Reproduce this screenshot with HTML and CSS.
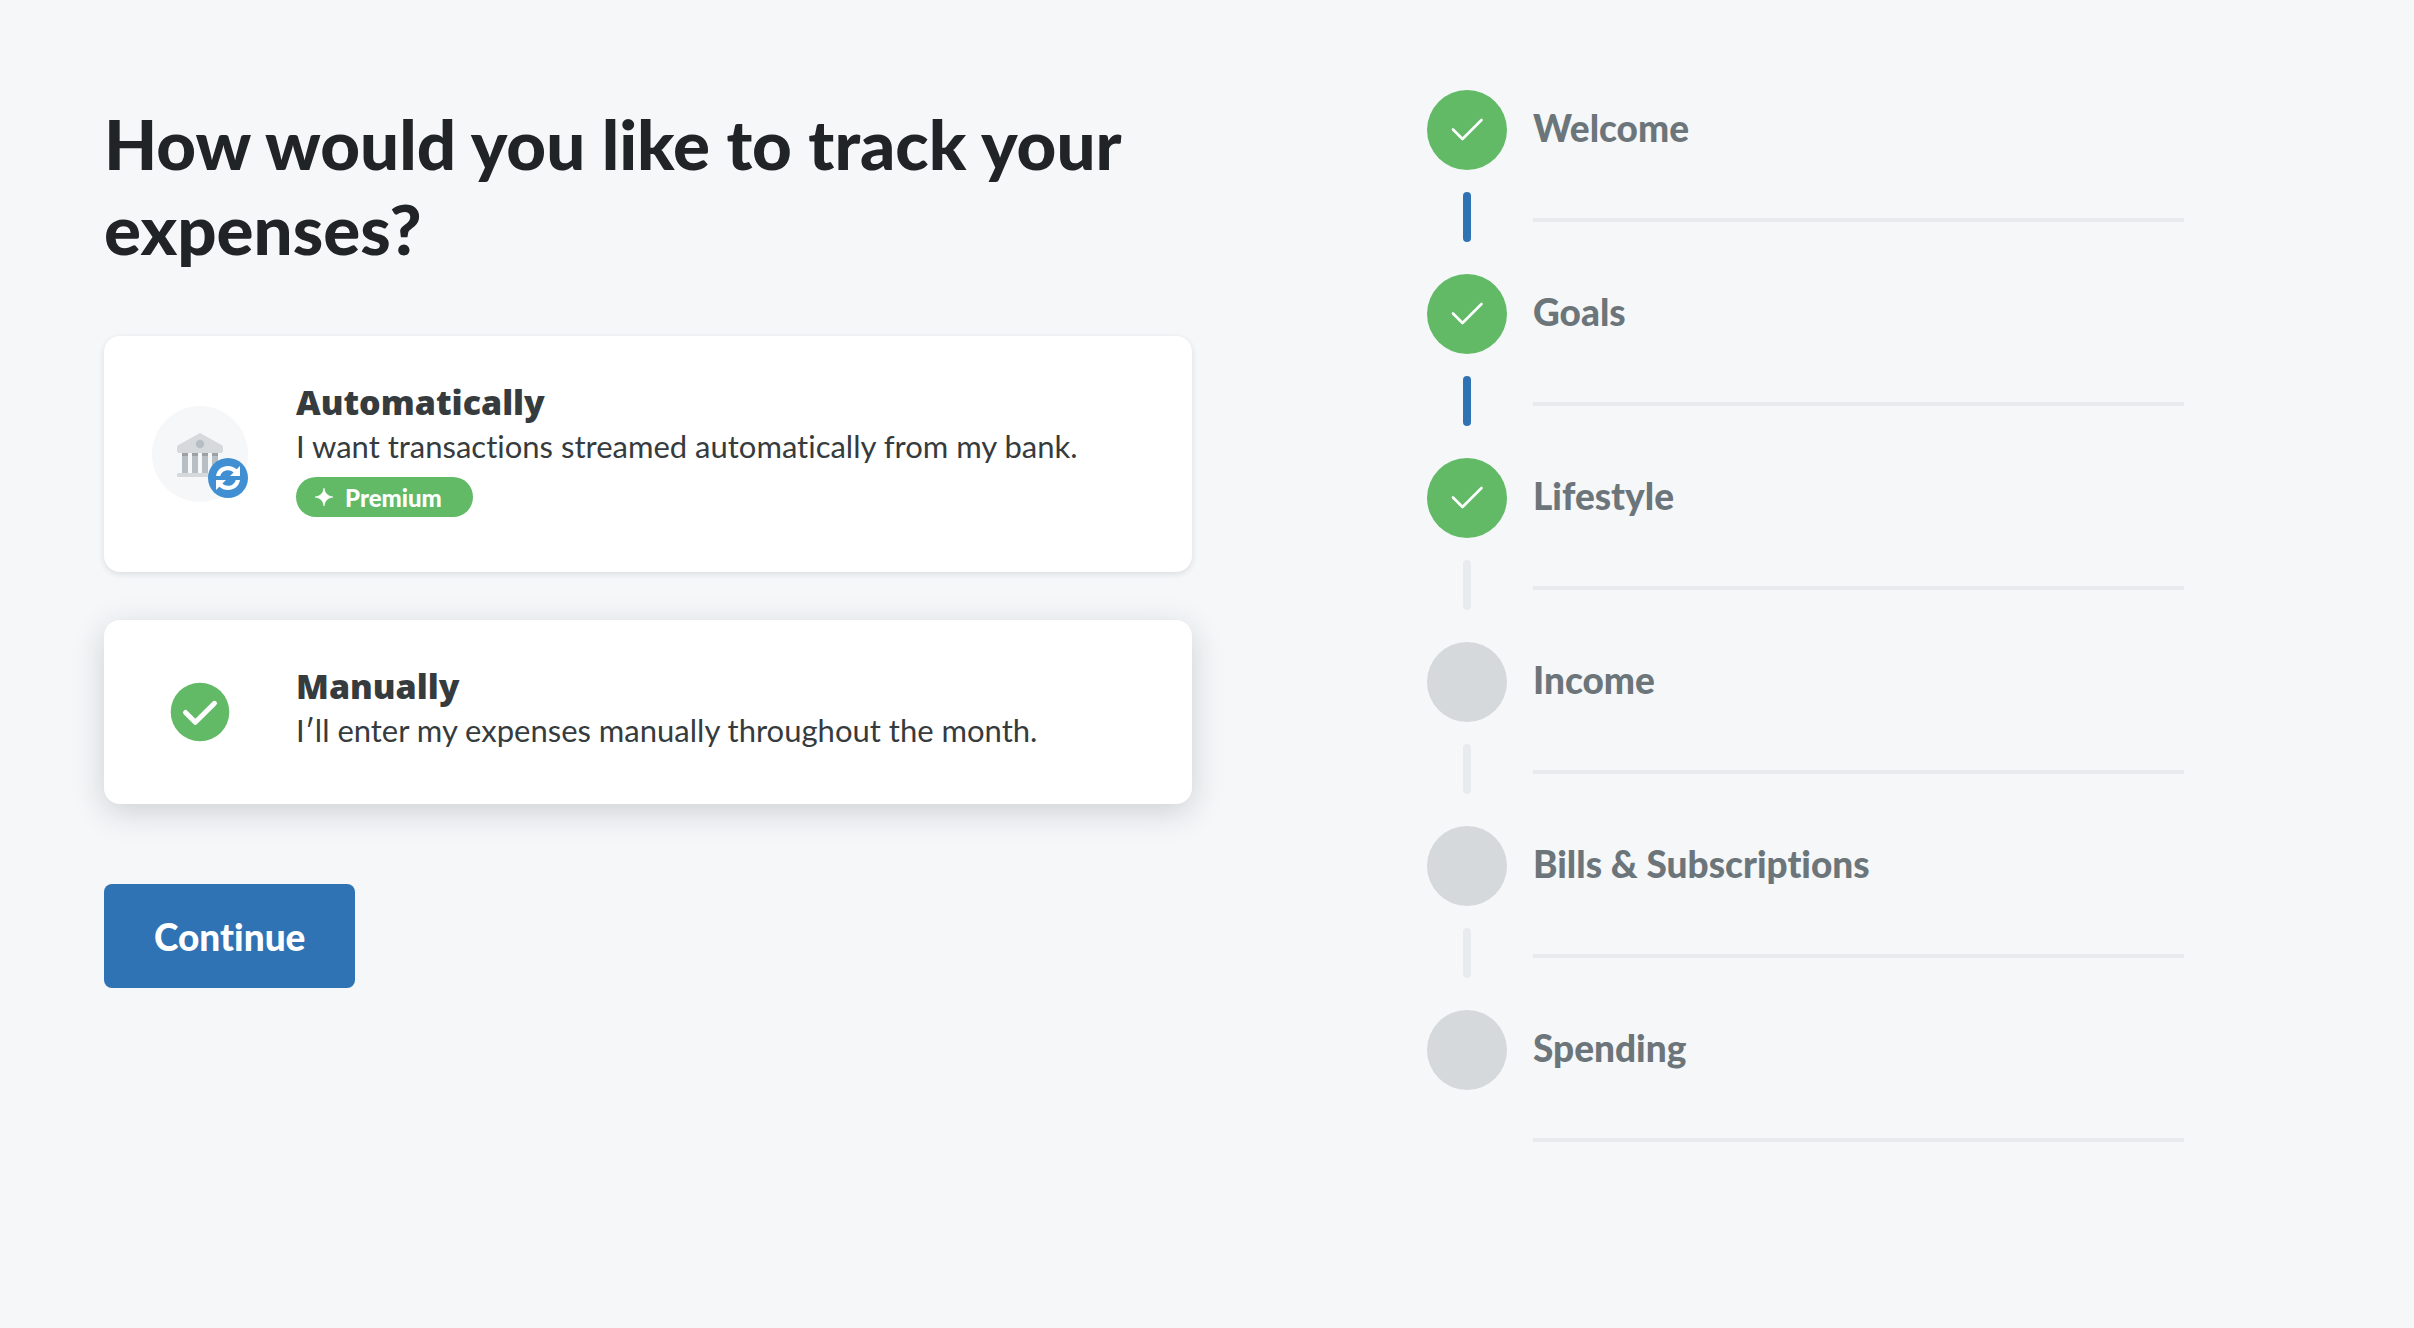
FILE: index.html
```html
<!DOCTYPE html>
<html lang="en">
<head>
<meta charset="utf-8">
<meta name="viewport" content="width=device-width, initial-scale=1">
<title>Expense tracking</title>
<link rel="stylesheet" href="styles.css">
</head>
<body>
<svg class="defs" aria-hidden="true">
  <symbol id="step-check" viewBox="0 0 80 80">
    <path d="M26 39.500 L35.500 49 L54.500 30" fill="none" stroke="#fff" stroke-width="2.600" stroke-linecap="round" stroke-linejoin="round"/>
  </symbol>
</svg>
<div class="page">
  <main class="question">
    <form>
      <h1 class="title" id="question">How would you like to track your expenses?</h1>
      <div class="options" role="radiogroup" aria-labelledby="question">
        <label class="option">
          <input class="option-input" type="radio" name="tracking" value="automatic">
          <svg class="option-icon" viewBox="0 0 96 96" aria-hidden="true">
            <circle cx="48" cy="48" r="48" fill="#f5f7f9"/>
            <path d="M25 41.500 Q25 39.800 26.500 39 L48 27 L69.500 39 Q71 39.800 71 41.500 V45 Q71 47 69 47 H27 Q25 47 25 45 Z" fill="#d5d9dc"/>
            <circle cx="48" cy="38" r="4.200" fill="#b8bfc4"/>
            <path d="M30 47h6v20h-6z M40 47h6v20h-6z M50 47h6v20h-6z M60 47h6v20h-6z" fill="#b8bfc4"/>
            <path d="M30 47h6v3h-6z M40 47h6v3h-6z M50 47h6v3h-6z M60 47h6v3h-6z" fill="#9aa0a4"/>
            <rect x="25" y="67" width="46" height="4" rx="1.500" fill="#d5d9dc"/>
            <circle cx="76" cy="72" r="20" fill="#3f8fd2"/>
            <path id="sync-half" d="M64 70 C65 63.500 70 60 76 60 C79.500 60 82.500 61.300 84.700 63.300 L88 60 V70 H78 L81.600 66.400 C80 65 78.200 64.200 76 64.200 C72 64.200 69.200 66.500 68.300 70 Z" fill="#fff"/>
            <use href="#sync-half" transform="rotate(180 76 72)"/>
          </svg>
          <span class="option-text">
            <span class="option-name">Automatically</span>
            <span class="option-desc">I want transactions streamed automatically from my bank.</span>
            <span class="badge">
              <svg class="badge-icon" viewBox="0 0 18 18" aria-hidden="true"><path d="M9 0 Q10 8 18 9 Q10 10 9 18 Q8 10 0 9 Q8 8 9 0Z" fill="#fff" stroke="#fff" stroke-width=".6"/></svg>
              Premium
            </span>
          </span>
        </label>
        <label class="option">
          <input class="option-input" type="radio" name="tracking" value="manual" checked>
          <svg class="option-icon" viewBox="0 0 96 96" aria-hidden="true">
            <circle cx="48" cy="48" r="29.300" fill="#62ba66"/>
            <path d="M33.500 48.500 L43.300 58.300 L62.500 39.300" fill="none" stroke="#fff" stroke-width="5" stroke-linecap="round" stroke-linejoin="round"/>
          </svg>
          <span class="option-text">
            <span class="option-name">Manually</span>
            <span class="option-desc">I′ll enter my expenses manually throughout the month.</span>
          </span>
        </label>
      </div>
      <button class="continue" type="submit">Continue</button>
    </form>
  </main>
  <aside class="progress" aria-label="Setup progress">
    <ol class="steps">
      <li class="step step-done step-passed"><span class="marker"><svg class="dot"><use href="#step-check"/></svg></span><span class="step-name">Welcome</span></li>
      <li class="step step-done step-passed"><span class="marker"><svg class="dot"><use href="#step-check"/></svg></span><span class="step-name">Goals</span></li>
      <li class="step step-done"><span class="marker"><svg class="dot"><use href="#step-check"/></svg></span><span class="step-name">Lifestyle</span></li>
      <li class="step"><span class="marker"><span class="dot"></span></span><span class="step-name">Income</span></li>
      <li class="step"><span class="marker"><span class="dot"></span></span><span class="step-name">Bills &amp; Subscriptions</span></li>
      <li class="step"><span class="marker"><span class="dot"></span></span><span class="step-name">Spending</span></li>
    </ol>
  </aside>
</div>
</body>
</html>
```
FILE: styles.css
```css
* {
  box-sizing: border-box;
}

body {
  margin: 0;
  background: #f5f7f9;
  color: #363b3e;
  font-family: Lato, "Open Sans", sans-serif;
  font-variant-ligatures: none;
}

.defs {
  display: none;
}

.page {
  display: grid;
  grid-template-columns: 1088fr 757fr;
  gap: 235px;
  align-items: start;
  padding: 90px 230px 90px 104px;
}

.title {
  margin: 11px 0 65px;
  color: #212427;
  font-size: 69px;
  line-height: 85px;
  font-weight: 900;
}

.options {
  display: flex;
  flex-direction: column;
  gap: 48px;
}

.option {
  display: flex;
  align-items: center;
  gap: 48px;
  padding: 48px;
  border-radius: 16px;
  background: #fff;
  box-shadow: 0 2px 6px rgba(33, 36, 39, 0.12);
  cursor: pointer;
}

.option:has(:checked) {
  box-shadow: 0 8px 32px rgba(33, 36, 39, 0.18);
}

.option-input {
  position: absolute;
  opacity: 0;
  pointer-events: none;
}

.option-icon {
  flex: none;
  width: 96px;
  height: 96px;
  margin-block: -8px;
}

.option-text {
  display: flex;
  flex-direction: column;
  align-items: flex-start;
}

.option-name {
  font-family: "Noto Sans", "Open Sans", sans-serif;
  font-size: 34px;
  line-height: 36px;
  font-weight: 900;
}

.option-desc {
  margin: 4px 0;
  font-size: 31px;
  line-height: 44px;
}

.badge {
  display: flex;
  align-items: center;
  gap: 12px;
  height: 40px;
  margin: 5px 0 7px;
  padding: 0 31px 0 19px;
  border-radius: 20px;
  background: #62ba66;
  color: #fff;
  font-size: 24px;
  font-weight: 900;
}

.badge-icon {
  width: 18px;
  height: 18px;
}

.continue {
  margin-top: 80px;
  padding: 0 50px;
  height: 104px;
  border: 0;
  border-radius: 8px;
  background: #2f73b5;
  color: #fff;
  font: 900 37px Lato, "Open Sans", sans-serif;
  font-variant-ligatures: none;
  cursor: pointer;
}

.steps {
  margin: 0;
  padding: 0;
  list-style: none;
}

.step {
  display: flex;
  gap: 26px;
  height: 184px;
}

.marker {
  display: flex;
  flex-direction: column;
  align-items: center;
  gap: 22px;
}

.dot {
  width: 80px;
  height: 80px;
  border-radius: 50%;
  background: #d5d9dc;
}

.step-done .dot {
  background: #62ba66;
}

.step:not(:last-child) .marker::after {
  content: "";
  width: 8px;
  height: 50px;
  border-radius: 4px;
  background: #e8ebed;
}

.step-passed:not(:last-child) .marker::after {
  background: #2f73b5;
}

.step-name {
  flex: 1;
  height: 132px;
  border-bottom: 4px solid #e8ebed;
  color: #6c757a;
  font-size: 37px;
  line-height: 76px;
  font-weight: 900;
}
```
